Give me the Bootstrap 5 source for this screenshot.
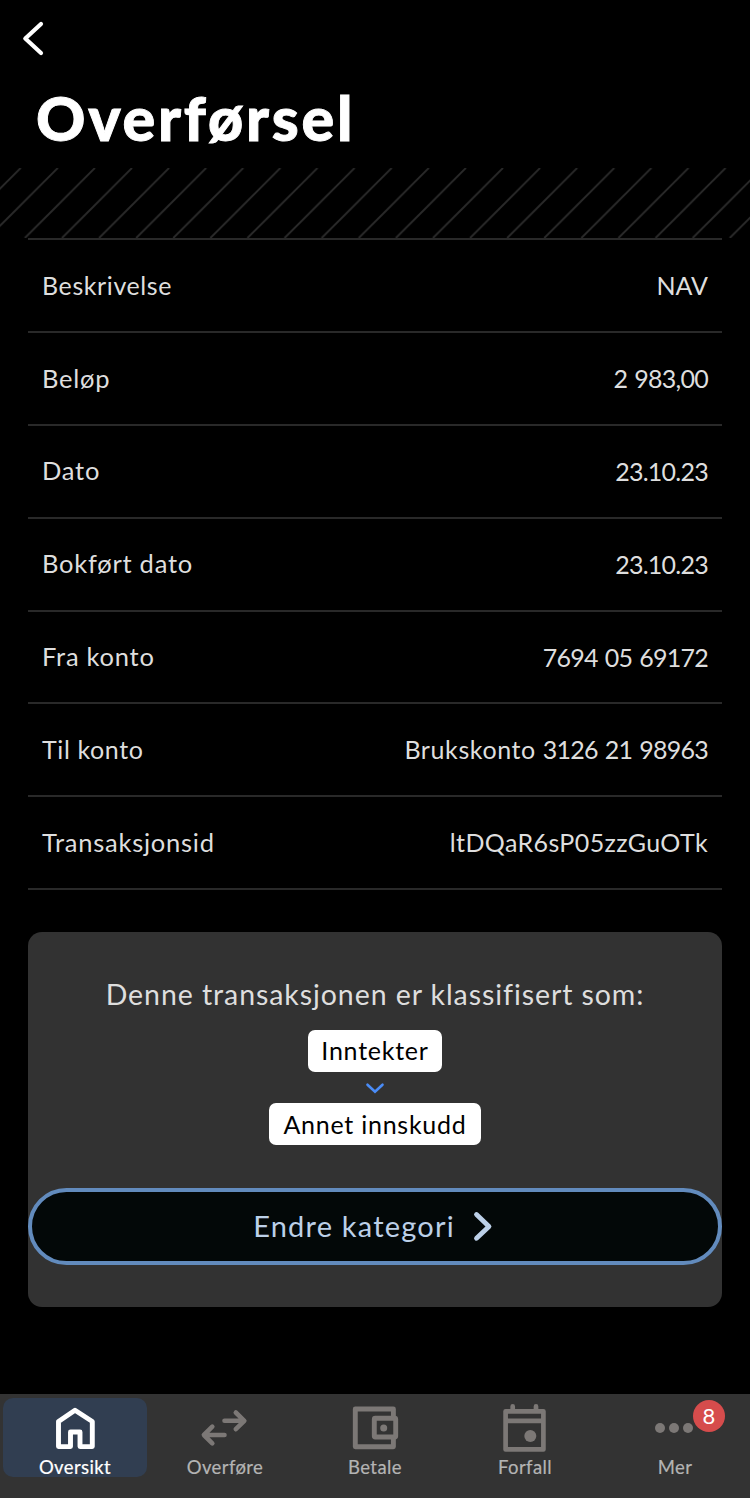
<!DOCTYPE html>
<html lang="no"><head><meta charset="utf-8"><meta name="viewport" content="width=device-width, initial-scale=1">
<title>Overførsel</title>
<link href="https://cdn.jsdelivr.net/npm/bootstrap@5.3.0/dist/css/bootstrap.min.css" rel="stylesheet">
<style>
body{background:#000;color:#dedede;font-family:Lato,"Open Sans",sans-serif;font-size:25px;line-height:1.2}
.page{height:1498px;overflow:hidden}
.topbar{height:78px;padding:20px 0 0 21px}
.title{height:90px;padding:2px 0 0 36px;font-size:61px;font-weight:900;line-height:76px;color:#fff;letter-spacing:2.8px;-webkit-text-stroke:.9px}
.stripes{height:70px}
.details{margin:0 28px;border-top:2px solid #292929}
.entry{height:92.9px;padding:0 14px 1px;border-bottom:2px solid #292929}
.wide{font-size:25.5px;letter-spacing:.75px}
.semi{letter-spacing:.6px}
.code{letter-spacing:.4px}
.digits{letter-spacing:-.75px;word-spacing:1.3px}
.panel{margin:41.700px 28px 0;height:374.700px;border-radius:14px;background:#323232}
.intro{font-size:28.5px;line-height:34px;margin-top:45.500px;letter-spacing:.92px;white-space:nowrap}
.chip{height:42px;border-radius:7px;background:#fff;color:#000;letter-spacing:.75px;padding-bottom:1px}
.chip-main{width:134px;margin-top:18.500px}
.chip-sub{width:212px}
.endre,.endre:hover{height:77px;border:4px solid #628bbd;border-radius:39px;background:#030808;color:#bcd0e8;font-size:29px;margin-top:42.300px;padding:0 2px 0 0;letter-spacing:1.2px}
.tabs{height:104px;background:#333;padding-top:4px}
.tab{width:150px;padding:0 3px}
.pane{height:79px;border-radius:10px;padding-top:6px;font-size:18.5px;line-height:24px;color:#b4b4b4;letter-spacing:.4px;-webkit-text-stroke:.2px}
.pane svg{width:60px;height:51px;color:#7c7876;flex-shrink:0}
.pane.on{background:#313e51;color:#fff}
.pane.on svg{color:#fff}
.count{position:absolute;left:90px;top:2px;width:32px;height:32px;background:#d64c4c;color:#fff;font-size:22px;letter-spacing:0;-webkit-text-stroke:0}
</style></head><body>
<div class="page d-flex flex-column">
<header class="topbar"><svg class="d-block" width="24" height="38" viewBox="0 0 24 38" fill="none" stroke="#fff" stroke-width="4.200" stroke-linecap="round" stroke-linejoin="round"><path d="M20 4 4.300 18.500 20 33"/></svg></header>
<h1 class="title m-0">Overførsel</h1>
<svg class="stripes d-block w-100"><defs><pattern id="p" width="37.1" height="70" patternUnits="userSpaceOnUse" x="20.700"><path d="M0 0-70 70M37.100 0-32.900 70M74.200 0 4.200 70M111.300 0 41.300 70" stroke="#292929" stroke-width="1.900"/></pattern></defs><rect width="750" height="70" fill="url(#p)"/></svg>
<section class="details">
<div class="entry d-flex justify-content-between align-items-center"><span class="semi">Beskrivelse</span><span>NAV</span></div>
<div class="entry d-flex justify-content-between align-items-center"><span class="wide">Beløp</span><span class="digits">2 983,00</span></div>
<div class="entry d-flex justify-content-between align-items-center"><span class="wide">Dato</span><span class="digits">23.10.23</span></div>
<div class="entry d-flex justify-content-between align-items-center"><span class="wide">Bokført dato</span><span class="digits">23.10.23</span></div>
<div class="entry d-flex justify-content-between align-items-center"><span class="wide">Fra konto</span><span class="digits">7694 05 69172</span></div>
<div class="entry d-flex justify-content-between align-items-center"><span class="semi">Til konto</span><span class="semi">Brukskonto <span class="digits">3126 21 98963</span></span></div>
<div class="entry d-flex justify-content-between align-items-center"><span class="wide">Transaksjonsid</span><span class="code">ltDQaR6sP05zzGuOTk</span></div>
</section>
<section class="panel d-flex flex-column align-items-center">
<div class="intro">Denne transaksjonen er klassifisert som:</div>
<div class="chip chip-main d-flex align-items-center justify-content-center">Inntekter</div>
<svg width="22" height="31.500" viewBox="0 0 22 31" fill="none" stroke="#4a8cf7" stroke-width="2.600" stroke-linecap="round"><path d="M3.500 12.500 11 19.500 18.500 12.500"/></svg>
<div class="chip chip-sub d-flex align-items-center justify-content-center">Annet innskudd</div>
<button class="endre btn w-100 d-flex justify-content-center align-items-center"><span>Endre kategori</span><svg class="ms-3" width="24" height="32" viewBox="0 0 24 32" fill="none" stroke="currentColor" stroke-width="4.800" stroke-linecap="round" stroke-linejoin="round"><path d="M5.500 4.500 18 16.400 5.500 28.300"/></svg></button>
</section>
<nav class="tabs d-flex mt-auto">
<div class="tab"><div class="pane on d-flex flex-column align-items-center"><svg viewBox="0 0 60 51" fill="none" stroke="currentColor" stroke-width="4.900" stroke-linejoin="round"><path d="M30 6.300 13.500 17.500V42.600H25.500V28H35V42.600H47.300V17.500Z"/></svg><span>Oversikt</span></div></div>
<div class="tab"><div class="pane d-flex flex-column align-items-center"><svg viewBox="0 0 60 51" fill="none" stroke="currentColor" stroke-width="4.600" stroke-linejoin="round" stroke-linecap="round"><path d="M29.500 16.800H49M40.800 8.500 49.300 16.800 40.800 25.200M29.500 31H9.500M17.300 22.700 8.900 31 17.300 39.400"/></svg><span>Overføre</span></div></div>
<div class="tab"><div class="pane d-flex flex-column align-items-center"><svg viewBox="0 0 60 51" fill="none" stroke="currentColor" stroke-width="4.900" stroke-linejoin="round"><path d="M48.400 14V5H10.300V42.700H48.400V33"/><rect x="29.300" y="14.300" width="21.400" height="18.700" rx="1"/><circle cx="38.700" cy="24" r="3.500" fill="currentColor" stroke="none"/></svg><span>Betale</span></div></div>
<div class="tab"><div class="pane d-flex flex-column align-items-center"><svg viewBox="0 0 60 51" fill="none" stroke="currentColor" stroke-width="4.700" stroke-linejoin="round" stroke-linecap="round"><path d="M10.600 7.300H48.400V45.400H10.600ZM10.600 16.800H48.400M17.700 2.400V6M41 2.400V6"/><circle cx="35.300" cy="32" r="6" fill="currentColor" stroke="none"/></svg><span>Forfall</span></div></div>
<div class="tab"><div class="pane position-relative d-flex flex-column align-items-center"><svg viewBox="0 0 60 51" fill="currentColor"><circle cx="15" cy="24" r="5"/><circle cx="29" cy="24" r="5"/><circle cx="43" cy="24" r="5"/></svg><span>Mer</span><span class="count rounded-circle d-flex align-items-center justify-content-center">8</span></div></div>
</nav></div>
<script src="https://cdn.jsdelivr.net/npm/bootstrap@5.3.0/dist/js/bootstrap.bundle.min.js"></script>
</body></html>
